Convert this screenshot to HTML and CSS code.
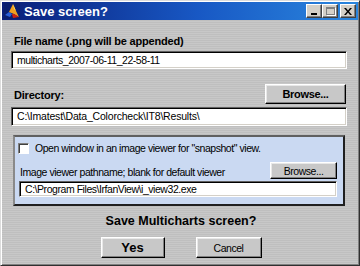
FILE: index.html
```html
<!DOCTYPE html>
<html lang="en">
<head>
	<meta charset="UTF-8">
	<title>Save screen?</title>
	<link rel="stylesheet" href="styles.css">
</head>
<body>
	<div class="window">
		<div class="titlebar">
			<svg class="app-icon" width="16" height="16" viewBox="0 0 16 16">
				<rect width="16" height="16" fill="#0a1e6e"/>
				<path d="M1 12 L5 9 L8 11 L6 14 Z" fill="#2a5fd8"/>
				<path d="M5 9 L9 1 L12 8 L15 14 L10 11 Z" fill="#f0a020"/>
				<path d="M8 11 L10 11 L15 14 L9 15 Z" fill="#d02010"/>
				<path d="M9 1 L10 6 L12 8 Z" fill="#ffe060"/>
			</svg>
			<span class="title">Save screen?</span>
			<div class="caption-btns">
				<a href="#" class="cap-btn cap-min"><span></span></a>
				<a href="#" class="cap-btn cap-max"><span></span></a>
				<a href="#" class="cap-btn cap-close">
					<svg width="8" height="7" viewBox="0 0 8 7"><path d="M0 0h2l2 2.5L6 0h2L5 3.5 8 7H6L4 4.5 2 7H0l3-3.5z" fill="#000"/></svg>
				</a>
			</div>
		</div>
		<div class="content">
			<p class="label">File name (.png will be appended)</p>
			<div class="field">multicharts_2007-06-11_22-58-11</div>
			<div class="dir-row">
				<p class="label">Directory:</p>
				<a href="#" class="btn btn-browse">Browse...</a>
			</div>
			<div class="field field-dir">C:\Imatest\Data_Colorcheck\IT8\Results\</div>
			<div class="panel">
				<label class="check-row"><span class="checkbox"></span>Open window in an image viewer for "snapshot" view.</label>
				<div class="viewer-row">
					<span>Image viewer pathname; blank for default viewer</span>
					<a href="#" class="btn btn-small">Browse...</a>
				</div>
				<div class="field field-small">C:\Program Files\IrfanView\i_view32.exe</div>
			</div>
			<p class="question">Save Multicharts screen?</p>
			<div class="actions">
				<a href="#" class="btn btn-yes">Yes</a>
				<a href="#" class="btn btn-cancel">Cancel</a>
			</div>
		</div>
	</div>
</body>
</html>
```

FILE: styles.css
```css
body,p,div{
	margin: 0;
	padding: 0;
}
body{
	font-family: "Liberation Sans", Arial, sans-serif;
	background: #c4c4c4;
}
a{
	color: #000;
	text-decoration: none;
}
.window{
	box-sizing: border-box;
	width: 360px;
	height: 266px;
	padding: 1px;
	border: 1px solid;
	border-color: #dcdcdc #303030 #303030 #dcdcdc;
	box-shadow: inset 1px 1px #fff, inset -1px -1px #808080;
	background: repeating-linear-gradient(#c8c8c8 0 1px, #bfbfbf 1px 2px);
}
.titlebar{
	display: flex;
	align-items: center;
	height: 18px;
	padding: 0 2px 0 2px;
	background: linear-gradient(to right, #0a1e78, #1858c4 55%, #2a86de);
}
.app-icon{
	flex: none;
}
.title{
	margin-left: 4px;
	color: #fff;
	font-weight: bold;
	font-size: 13px;
}
.caption-btns{
	display: flex;
	margin-left: auto;
}
.cap-btn{
	box-sizing: border-box;
	display: flex;
	align-items: center;
	justify-content: center;
	width: 16px;
	height: 14px;
	background: #d4d0c8;
	border: 1px solid;
	border-color: #fff #404040 #404040 #fff;
	box-shadow: inset -1px -1px #808080;
}
.cap-min span{
	width: 6px;
	height: 2px;
	margin-top: 5px;
	background: #000;
}
.cap-max span{
	box-sizing: border-box;
	width: 9px;
	height: 8px;
	border: 1px solid #808080;
	border-top-width: 2px;
	box-shadow: 1px 1px #fff;
}
.cap-close{
	margin-left: 2px;
}
.content{
	padding: 0 11px 0 9px;
}
.label{
	font-size: 11px;
	font-weight: bold;
	letter-spacing: -0.2px;
	line-height: 14px;
	padding-left: 3px;
}
.content > .label{
	margin-top: 14px;
}
.field{
	box-sizing: border-box;
	height: 18px;
	margin-top: 3px;
	padding: 0 5px;
	background: #fff;
	border: 1px solid;
	border-color: #606060 #fff #fff #606060;
	box-shadow: inset 1px 1px #000, inset -1px -1px #d4d0c8;
	font-size: 10.5px;
	letter-spacing: -0.45px;
	line-height: 16px;
	white-space: nowrap;
	overflow: hidden;
}
.dir-row{
	display: flex;
	align-items: flex-end;
	justify-content: space-between;
	margin-top: 15px;
}
.dir-row .label{
	padding-bottom: 2px;
}
.btn{
	box-sizing: border-box;
	display: flex;
	align-items: center;
	justify-content: center;
	background: #c8c8c8;
	border: 1px solid;
	border-color: #fff #000 #000 #fff;
	box-shadow: inset -1px -1px #808080, inset 1px 1px #e8e8e8;
	font-size: 10.5px;
	letter-spacing: -0.45px;
}
.btn-browse{
	width: 81px;
	height: 20px;
	margin-right: 1px;
	font-weight: bold;
	font-size: 11px;
	letter-spacing: -0.3px;
}
.field-dir{
	margin-top: 3px;
	height: 19px;
	line-height: 17px;
	letter-spacing: -0.2px;
}
.panel{
	margin: 9px 2px 0 2px;
	height: 71px;
	box-sizing: border-box;
	padding: 5px 6px 0 3px;
	background: #cad9f2;
	border: 2px solid;
	border-color: #606060 #202020 #202020 #8a8a8a;
	font-size: 10.5px;
	letter-spacing: -0.45px;
}
.check-row{
	display: flex;
	align-items: center;
	height: 12px;
}
.checkbox{
	box-sizing: border-box;
	width: 11px;
	height: 11px;
	margin-right: 6px;
	background: #fff;
	border: 1px solid;
	border-color: #808080 #fff #fff #808080;
	box-shadow: inset 1px 1px #404040;
}
.viewer-row{
	display: flex;
	align-items: flex-end;
	justify-content: space-between;
	margin-top: 8px;
	padding-left: 2px;
}
.viewer-row span{
	padding-bottom: 1px;
}
.btn-small{
	width: 67px;
	height: 17px;
}
.field-small{
	margin: 2px 0 0 1px;
	height: 16px;
	line-height: 14px;
}
.question{
	margin-top: 8px;
	text-align: center;
	font-size: 12.5px;
	font-weight: bold;
	line-height: 14px;
	padding-left: 4px;
}
.actions{
	display: flex;
	justify-content: center;
	gap: 31px;
	margin-top: 9px;
	padding-left: 4px;
}
.btn-yes{
	width: 64px;
	height: 21px;
	font-weight: bold;
	font-size: 13px;
	letter-spacing: 0;
}
.btn-cancel{
	width: 66px;
	height: 21px;
}
```
